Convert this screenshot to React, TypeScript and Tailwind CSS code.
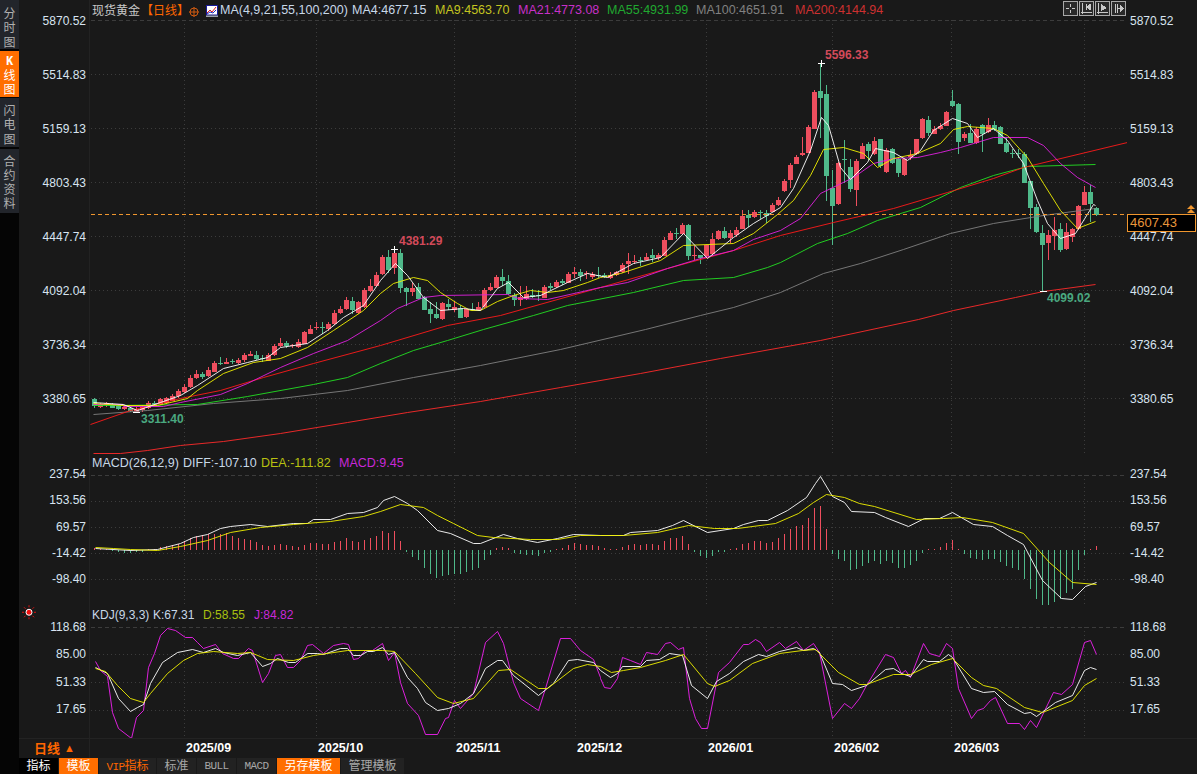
type Candle = [number, number, number, number, number];

// candle rows read off as [bodyTop, bodyBottom, high, low, isRed]
const rowsA: Candle[] = [
  [508,530,503,532,0],[522,530,520,534,1],[520,524,516,530,1],[524,534,520,536,0],[528,536,524,538,0],[530,537,526,540,1],[534,544,530,546,0],[536,546,532,550,1],[530,540,524,544,1],[520,534,514,538,1],[520,527,514,530,0],[508,524,504,526,1],[504,518,502,522,1],[498,512,492,514,1],[484,500,478,504,1],[470,486,462,488,1],[444,470,436,474,1],[432,444,420,446,1],[432,440,426,448,0],[420,438,410,440,1],[398,424,392,426,1],[398,402,380,404,0],[396,402,385,404,1],[394,398,388,404,0],[390,400,384,402,1],[376,392,368,394,1],[372,378,364,380,1],[374,386,364,392,0],[384,388,376,398,0],[374,392,370,394,1],[348,376,342,378,1],[338,348,324,350,1],[340,350,332,354,0],[346,350,342,354,1],[336,350,326,352,1],[306,342,304,344,1],[296,310,286,312,1],[292,296,276,300,1],[292,296,276,312,0],[282,298,276,304,1],[248,282,240,284,1],[238,250,228,252,1],[210,238,200,240,1],[212,240,200,250,0],[216,250,212,252,1],[180,232,174,234,1],[168,182,146,184,1],[134,166,126,168,1],[82,134,76,136,1],[80,118,60,130,0],[70,116,50,130,1],[70,174,58,190,0],[174,186,170,226,0],[174,186,160,200,1],[170,206,160,208,0],[200,240,198,240,0],[238,252,216,278,0],[252,264,216,266,0],[220,268,216,270,1],[222,232,208,240,0],[232,242,212,244,1],[234,264,226,264,0],[238,262,236,264,1],[236,240,220,244,0],[232,240,216,244,1],
];
const rowsB: Candle[] = [
  [270,322,264,324,1],[262,272,250,274,1],[232,264,226,266,1],[232,244,208,260,0],[244,284,224,284,0],[286,300,278,318,0],[292,300,258,318,1],[282,296,258,300,1],[284,290,268,296,0],[284,288,270,304,0],[262,294,256,296,1],[258,264,248,268,0],[246,262,240,264,1],[244,250,236,254,0],[222,248,216,250,1],[216,222,200,234,1],[216,228,208,244,0],[220,224,214,238,1],[222,232,216,238,1],[226,230,202,236,0],[226,232,220,236,0],[224,232,216,236,1],[216,224,212,226,1],[196,218,190,220,1],[184,192,158,220,1],[182,186,164,190,1],[180,184,170,196,0],[170,180,160,182,1],[164,172,146,186,0],[166,176,158,178,1],[120,168,112,170,1],[98,118,92,120,1],[98,102,84,118,0],[76,102,68,104,1],[76,170,72,180,0],[166,170,138,180,1],[166,176,164,190,0],[136,168,136,176,1],[118,164,98,166,1],[94,118,90,120,1],[92,114,80,116,0],[100,114,90,128,1],[90,104,80,110,1],[48,86,30,88,1],[44,52,30,80,0],[36,52,30,54,1],[36,40,30,56,0],[38,48,30,70,0],[16,36,10,38,1],[0,16,-8,18,1],
];
const rowsC: Candle[] = [
  [362,392,356,394,1],[314,360,310,386,1],[290,312,286,314,1],[280,286,232,288,1],[200,278,196,280,1],[95,205,90,207,1],[93,114,10,235,0],[102,348,76,425,0],[385,440,330,555,0],[308,432,306,434,1],[298,302,240,370,0],[322,388,296,394,0],[304,392,296,438,1],[258,296,250,298,1],[252,274,246,300,0],[244,282,230,284,1],[238,320,236,322,0],[270,336,264,338,1],[268,310,264,312,0],[298,340,292,352,0],[298,346,296,348,1],[284,290,270,300,1],[238,282,236,284,1],[178,234,174,236,1],[180,218,168,228,0],[206,220,198,222,1],[198,208,188,210,1],[155,196,152,198,1],[122,138,90,140,0],[132,246,130,284,0],[222,234,216,242,1],[218,248,192,250,0],[206,248,200,250,1],[196,222,192,276,0],[196,216,174,218,1],[196,210,182,212,0],[200,250,198,252,0],[248,276,230,278,0],[279,281,268,294,0],[279,281,268,295,0],[282,368,276,370,0],[364,444,362,505,0],[442,516,432,518,0],[518,554,495,692,0],[524,548,510,600,1],[510,528,470,570,1],[508,570,490,578,0],[516,566,488,568,1],[506,530,504,545,1],[438,508,434,510,1],[396,434,378,436,1],[396,432,375,485,0],[444,464,440,466,0],
];

const crop = (rows: Candle[], oy: number): Candle[] =>
  rows.map(([t, b, h, l, r]) => [oy + t / 3, oy + b / 3, oy + h / 3, oy + l / 3, r]);
const candles = [...crop(rowsA, 230), ...crop(rowsB, 200), ...crop(rowsC, 60)];

const barsA = [2,1,1,-1,-2,-3,-3,-2,-2,1,1,3,4,5,6,9,12,14,14.5,16,16,16,17,14,12,11,10,8,5,4,5,6,5,4,3,5,7,7,6,6,8,9,12,9,8,10,12,14,19,17,19,9,-2,-7,-10,-18,-24,-28,-26,-25,-24,-24,-22,-20,-18,-10,-5,2,3,2,-3,-4,-5,-5,-6,-3,-2,1,2,5,7,6,5,5,4];
const barsB = [2,1,1,3,6,7,6,7,7,6,10,14,14,16,7,-2,-7,-9,-7,-2,-2,1,2,7,8,10,10,8,9,14,18,24,27,28,36,48,50,24,-5,-10,-13,-23,-22,-18,-15,-13,-16,-13,-15,-20,-20,-17,-12,-3,1,1,3,8,11,1,-4,-9,-10,-11,-10,-10,-14,-18,-20,-23,-33,-44,-56,-63,-66,-59,-56,-49,-45,-23,-6,1,4].map((v) => v * 0.876);
const macdBars = [...barsA, ...barsB];

const ma200 = "93,453 120,453 147,450 180,445 223,441 280,433 347,422 407,412 480,401 560,387 640,373 720,358 820,340 918,319 953,310 1015,297 1043,291 1095,284";
const trend = "90,424 130,410 180,398 220,390 263,377 313,363 380,345 447,325 500,315 600,287 667,268 733,250 780,235 833,222 893,208 947,192 993,178 1023,167 1127,142";
const ma100 = "93,414 147,410 213,403 280,398 347,390 413,377 480,365 560,349 645,329 700,315 733,307 780,292 823,273 860,263 903,249 950,233 993,223 1043,215 1095,208";
const ma55 = "93,405 113,405 197,404 247,396 313,384 347,377 380,363 413,350 447,340 483,329 533,315 567,305 633,292 683,280 733,277 767,267 780,262 817,243 847,233 877,220 920,207 960,187 993,175 1027,166 1095,164";
const ma21 = "93,404 123,404 123,406 163,406 180,402 220,394 247,383 280,367 313,353 347,340 380,320 397,308 423,297 440,295 507,294 518,298 547,299 600,287 627,282 667,268 700,258 733,250 753,239 780,230 800,218 820,193 853,177 873,163 893,158 917,157 940,152 960,147 993,137 1027,137 1043,145 1060,163 1077,177 1095,187";
const ma9 = "93,403 123,405 157,405 187,398 197,390 223,373 253,362 280,358 307,347 333,330 363,310 380,293 393,283 413,277 427,280 440,292 457,303 470,310 480,310 497,301 513,295 530,290 547,292 563,290 587,282 600,277 620,273 660,260 683,245 733,243 753,233 777,214 793,200 810,175 823,149 843,147 863,153 877,167 893,158 917,153 940,143 953,129 967,126 993,128 1007,135 1027,157 1043,183 1060,210 1077,228 1095,221";
const ma4 = "93,402 123,404 137,410 160,402 180,395 197,385 223,368 247,362 267,357 280,347 307,343 327,330 343,317 363,305 380,280 395,263 407,275 423,297 440,310 463,308 480,310 497,288 508,282 523,297 540,295 567,282 587,273 607,277 633,263 660,257 683,233 707,258 733,237 753,223 780,207 793,188 810,150 821,117 828,125 840,167 850,179 867,162 875,148 893,152 907,160 920,150 933,130 952,118 967,123 977,137 993,128 1007,140 1023,163 1037,200 1047,223 1060,238 1075,233 1093,204 1095,205";

// flat x,y lists read from crops; 3x crops use sx 3, the wide ones 2.627
const path = (ox: number, oy: number, sx: number, d: number[]) => {
  const out: string[] = [];
  for (let i = 0; i < d.length; i += 2) out.push(`${Math.round(ox + d[i] / sx)},${Math.round(oy + d[i + 1] / 3)}`);
  return out.join(" ");
};

const diff = path(80,455,3,[44,278,150,285,230,283,300,265,340,245,380,238,420,218,450,214,510,208,560,212,640,205,680,203,700,193,750,192,800,175,850,172,890,155,910,135,943,124,980,145,1010,165,1072,225,1110,235,1180,265,1200,265,1270,238,1310,250,1370,260,1430,250,1480,238,1560,240]) + " " +
  path(600,455,2.627,[0,240,60,240,80,230,150,224,190,210,218,196,280,230,350,218,375,208,415,196,440,196,490,165,540,125,565,85,578,64,610,123,640,140,660,168,720,170,750,185,810,212,850,190,890,190,925,172,980,207,1030,212,1070,240,1110,268,1160,375,1210,430,1240,431,1275,393,1303,381]);
const dea = path(80,455,3,[44,277,100,278,150,283,230,284,300,272,380,255,450,232,540,217,640,207,750,198,850,182,900,168,960,148,1030,155,1070,180,1120,205,1190,240,1240,246,1350,252,1430,252,1500,241,1560,240]) + " " +
  path(600,455,2.627,[0,241,60,240,150,232,230,210,300,220,360,218,460,205,520,175,560,140,595,118,640,127,680,145,720,153,830,192,900,190,950,186,1030,200,1110,235,1180,320,1240,380,1303,388]);

const kdjJ = path(80,605,3,[44,168,60,195,80,212,97,320,115,370,152,398,168,335,188,315,205,185,222,145,240,90,260,70,285,75,315,95,335,95,350,110,368,130,405,118,425,145,460,158,475,158,505,128,515,135,547,230,565,205,585,150,600,148,620,185,640,185,660,165,680,120,695,118,730,145,760,120,790,115,805,118,820,162,835,160,855,135,875,135,905,115,925,165,943,140,960,230,980,295,1015,330,1035,387,1070,387,1095,340,1105,335,1122,285,1140,310,1180,265,1215,110,1250,78,1270,115,1300,230,1320,280,1375,315,1395,250,1440,100,1470,100,1500,135,1540,162,1560,215]) + " " +
  path(600,605,2.627,[0,218,10,245,25,250,45,220,58,155,80,165,105,178,120,142,150,148,170,115,185,112,205,133,217,125,235,280,250,340,265,370,280,370,310,200,340,170,375,118,390,118,407,102,420,110,437,137,470,110,487,128,515,108,533,135,560,115,575,140,610,340,640,295,660,310,680,280,700,240,750,148,770,155,790,205,800,195,815,215,848,115,865,145,890,152,910,115,925,130,940,250,975,338,990,315,1005,310,1025,285,1037,275,1070,355,1100,355,1115,372,1130,345,1145,365,1190,262,1210,268,1240,238,1272,112,1288,105,1303,148]);
const kdjK = path(80,605,3,[44,185,80,205,115,280,150,318,170,305,190,298,210,235,245,170,290,142,335,132,370,140,405,130,430,142,470,150,510,140,547,182,570,175,590,160,625,170,645,172,680,145,710,145,730,148,780,130,800,130,820,150,840,150,860,138,880,138,905,125,925,148,943,142,980,215,1010,250,1035,290,1070,315,1105,308,1140,295,1180,265,1215,190,1250,165,1265,165,1300,210,1375,270,1420,235,1465,165,1490,163,1540,172,1560,195]) + " " +
  path(600,605,2.627,[0,195,25,215,45,205,58,182,105,182,120,165,155,162,180,143,215,150,240,240,280,280,305,228,340,205,375,168,415,148,437,152,470,138,515,127,533,135,560,128,575,140,610,235,635,238,660,255,700,240,750,192,770,188,790,205,815,212,848,162,860,168,890,168,915,148,925,155,975,250,1005,262,1035,258,1070,298,1115,325,1130,322,1145,333,1195,292,1240,270,1272,195,1288,186,1303,193]);
const kdjD = path(80,605,3,[44,190,75,197,110,240,150,280,190,290,210,265,260,205,310,165,350,145,400,138,470,145,510,140,560,162,640,165,700,150,800,135,905,135,943,138,1005,205,1070,275,1120,295,1180,280,1255,195,1290,193,1375,248,1400,250,1480,190,1520,178,1560,182]) + " " +
  path(600,605,2.627,[0,183,30,200,60,195,105,187,170,165,218,148,280,235,300,243,340,225,400,175,470,145,530,135,565,132,625,200,680,238,700,238,770,208,815,208,870,178,925,158,975,215,1005,240,1040,250,1115,305,1160,320,1240,285,1272,240,1303,218]);

const RED = "#ee4e5e";
const GREEN = "#4fb98a";
const monthX = [184, 316, 454, 575, 706, 832, 951, 1084];

function Grid({ top, bottom, rows }: { top: number; bottom: number; rows: number[] }) {
  return (
    <g shapeRendering="crispEdges" strokeWidth={1}>
      <line x1={91} x2={1127} y1={top + 0.5} y2={top + 0.5} stroke="#3c3c3c" strokeDasharray="4 3" />
      {rows.map((y) => (
        <line key={y} x1={91} x2={1127} y1={y + 0.5} y2={y + 0.5} stroke="#3c3c3c" strokeDasharray="1 3" />
      ))}
      {monthX.map((x) => (
        <line key={x} x1={x + 0.5} x2={x + 0.5} y1={top} y2={bottom} stroke="#3c3c3c" strokeDasharray="1 3" />
      ))}
    </g>
  );
}

function Line({ points, color }: { points: string; color: string }) {
  return <polyline points={points} fill="none" stroke={color} strokeWidth={0.9} strokeLinejoin="bevel" transform="translate(0.5 0.5)" />;
}

function Cross({ x, y }: { x: number; y: number }) {
  return <path d={`M${x - 3} ${y + 0.5}H${x + 4}M${x + 0.5} ${y - 3}V${y + 4}`} stroke="#fff" shapeRendering="crispEdges" />;
}

function MainChart() {
  const n = candles.length;
  return (
    <svg viewBox="90 20 1037 435" className="block w-[1037px] h-[435px]">
      <Grid top={20} bottom={455} rows={[74, 128, 182, 236, 290, 344, 398]} />
      <g shapeRendering="crispEdges">
        {candles.map(([t, b, h, l, r], i) => {
          const x = 1096 - 6 * (n - 1 - i);
          const c = r ? RED : GREEN;
          return (
            <g key={i} fill={c}>
              <rect x={x} y={Math.round(h)} width={1} height={Math.max(1, Math.round(l - h))} />
              <rect x={x - 2} y={Math.round(t)} width={5} height={Math.max(1, Math.round(b - t))} />
            </g>
          );
        })}
      </g>
      <Line points={ma200} color="#ff2a2a" />
      <Line points={ma100} color="#808080" />
      <Line points={ma55} color="#22e022" />
      <Line points={trend} color="#ff1a1a" />
      <Line points={ma21} color="#e020e0" />
      <Line points={ma9} color="#f0f000" />
      <Line points={ma4} color="#ffffff" />
      <line x1={91} x2={1127} y1={214.5} y2={214.5} stroke="#f0962e" strokeDasharray="4 3" shapeRendering="crispEdges" />
      <Cross x={821} y={63} />
      <Cross x={394} y={249} />
      <path d="M1040 291.5H1047M133 412.5H140" stroke="#fff" shapeRendering="crispEdges" />
      <g className="text-[12px] font-bold">
        <text x={825} y={59} fill="#d24a5a">5596.33</text>
        <text x={399} y={245} fill="#d24a5a">4381.29</text>
        <text x={1047} y={302} fill="#4aa880">4099.02</text>
        <text x={141} y={423} fill="#4aa880">3311.40</text>
      </g>
    </svg>
  );
}

function MacdChart() {
  const n = macdBars.length;
  return (
    <svg viewBox="90 472 1037 133" className="block w-[1037px] h-[133px]">
      <Grid top={475} bottom={605} rows={[501, 527, 553, 579]} />
      <g shapeRendering="crispEdges">
        {macdBars.map((v, i) => {
          const x = 1096 - 6 * (n - 1 - i);
          return v >= 0 ? (
            <rect key={i} x={x} y={550 - Math.round(v)} width={1} height={Math.max(1, Math.round(v))} fill={RED} />
          ) : (
            <rect key={i} x={x} y={550} width={1} height={Math.round(-v)} fill={GREEN} />
          );
        })}
      </g>
      <Line points={diff} color="#ffffff" />
      <Line points={dea} color="#f0f000" />
    </svg>
  );
}

function KdjChart() {
  return (
    <svg viewBox="90 624 1037 114" className="block w-[1037px] h-[114px]">
      <Grid top={627} bottom={738} rows={[654, 682, 710]} />
      <Line points={kdjJ} color="#f020f0" />
      <Line points={kdjK} color="#ffffff" />
      <Line points={kdjD} color="#f0f000" />
    </svg>
  );
}

function ToolButton({ line, fill }: { line: string; fill?: string }) {
  return (
    <svg viewBox="0 0 15 15" className="w-[15px] h-[15px] block" shapeRendering="crispEdges">
      <rect x={0.5} y={0.5} width={14} height={14} fill="#2a2a2a" stroke="#a8a8a8" />
      <path d={line} fill="none" stroke="#c8c8c8" />
      {fill && <path d={fill} fill="#c8c8c8" />}
    </svg>
  );
}

function MaIcon() {
  return (
    <svg viewBox="0 0 12 12" className="w-[12px] h-[12px] block">
      <rect x={0.5} y={0.5} width={11} height={9.5} fill="#fff" stroke="#1a1a9a" />
      <polyline points="1,8 4,5 6,7 10,2" fill="none" stroke="#e02020" />
      <polyline points="1,9 4,7 7,8 10,5" fill="none" stroke="#2030c0" />
      <rect x={0} y={10.5} width={12} height={1.5} fill="#9aa0aa" />
    </svg>
  );
}

function AxisLabels({ items, gap }: { items: string[]; gap: string }) {
  return (
    <div className={`flex flex-col ${gap}`}>
      {items.map((t) => (
        <span key={t} className="h-[14px] leading-[14px]">{t}</span>
      ))}
    </div>
  );
}

const mainAxis = ["5870.52", "5514.83", "5159.13", "4803.43", "4447.74", "4092.04", "3736.34", "3380.65"];
const macdAxis = ["237.54", "153.56", "69.57", "-14.42", "-98.40"];
const kdjAxis = ["118.68", "85.00", "51.33", "17.65"];

export default function App() {
  return (
    <div className="w-[1197px] h-[774px] overflow-hidden flex bg-[#191919] text-[12px] text-[#d8e4f0] font-['Liberation_Sans','Noto_Sans_CJK_SC',sans-serif]">
      <aside className="w-[19px] shrink-0 bg-[#050505] flex flex-col gap-[1.5px] text-center leading-[14.3px] text-[#b0b0b0]">
        <div className="h-[49px] bg-[#22252b] pt-[7px]">分<br />时<br />图</div>
        <div className="h-[46px] bg-[#ff6e00] pt-[3px] text-white"><span className="font-['Liberation_Mono'] font-bold">K</span><br />线<br />图</div>
        <div className="h-[49px] bg-[#22252b] pt-[6px]">闪<br />电<br />图</div>
        <div className="h-[64px] bg-[#22252b] pt-[6px]">合<br />约<br />资<br />料</div>
      </aside>

      <div className="flex-1 flex flex-col min-w-0">
        <section className="h-[455px] flex">
          <div className="w-[71px] shrink-0 pt-[13.5px] pr-[3px] text-right border-r border-[#222222]">
            <AxisLabels items={mainAxis} gap="gap-[40px]" />
          </div>
          <div className="w-[1037px] shrink-0">
            <div className="h-[20px] flex items-center pl-[2px] pt-[1px] text-[12.5px] whitespace-nowrap">
              <span className="w-[49px] text-[#c8c8c8] text-[12px]">现货黄金</span>
              <span className="w-[48px] text-[#ff6600] text-[12px]">【日线】</span>
              <svg viewBox="0 0 10 10" className="w-[10px] h-[10px] mt-[2px]"><circle cx={5} cy={5} r={4} fill="none" stroke="#d05a10" /><path d="M0 5H10M5 0V10" stroke="#d05a10" /></svg>
              <span className="w-[7px]" />
              <MaIcon />
              <span className="w-[2px]" />
              <span className="w-[132px] text-[#c8d8e8]">MA(4,9,21,55,100,200)</span>
              <span className="w-[83px] text-[#c8d8e8]">MA4:4677.15</span>
              <span className="w-[83px] text-[#c4c420]">MA9:4563.70</span>
              <span className="w-[89px] text-[#c830c8]">MA21:4773.08</span>
              <span className="w-[89px] text-[#20a830]">MA55:4931.99</span>
              <span className="w-[99px] text-[#808080]">MA100:4651.91</span>
              <span className="text-[#cc3030]">MA200:4144.94</span>
              <div className="ml-auto flex gap-[1px] mr-[1px] -mt-[4px]">
                <ToolButton line="M7.5 3V6M7.5 9V12M3 7.5H6M9 7.5H12" />
                <ToolButton line="M3.5 2V13M2 11.5H13M7.5 3V9M11.5 3V9" fill="M7 6L11 3V9Z" />
                <ToolButton line="M3.5 2V13M2 11.5H13" fill="M6 3L12 7L6 10Z" />
                <ToolButton line="M4.5 3V12M6.5 3V12M6.5 7.5H9" fill="M9 4L13 7.5L9 11Z" />
              </div>
            </div>
            <MainChart />
          </div>
          <div className="relative flex-1 pt-[13.5px] pl-[3px]">
            <AxisLabels items={mainAxis} gap="gap-[40px]" />
            <div className="absolute left-0 top-[214px] w-[69px] h-[18px] border border-[#f0962e] bg-black pl-[2px] leading-[16px] text-[13px] text-[#e8963c]">4607.43</div>
            <svg viewBox="0 0 10 8" className="absolute left-[59px] top-[205px] w-[10px] h-[8px]"><path d="M1 4L5 0L9 4ZM1 8L5 4L9 8Z" fill="#f0962e" /></svg>
          </div>
        </section>

        <section className="h-[150px] flex">
          <div className="w-[71px] shrink-0 pt-[12px] pr-[3px] text-right border-r border-[#222222]">
            <AxisLabels items={macdAxis} gap="gap-[12.25px]" />
          </div>
          <div className="w-[1037px] shrink-0">
            <div className="h-[17px] flex items-center pl-[2px] text-[12.5px] whitespace-nowrap">
              <span className="w-[91px] text-[#c8d8e8]">MACD(26,12,9)</span>
              <span className="w-[78px] text-[#c8d8e8]">DIFF:-107.10</span>
              <span className="w-[78px] text-[#b8c010]">DEA:-111.82</span>
              <span className="text-[#c828d8]">MACD:9.45</span>
            </div>
            <MacdChart />
          </div>
          <div className="flex-1 pt-[12px] pl-[3px]">
            <AxisLabels items={macdAxis} gap="gap-[12.25px]" />
          </div>
        </section>

        <section className="h-[133px] flex">
          <div className="w-[71px] shrink-0 pr-[3px] text-right border-r border-[#222222]">
            <svg viewBox="0 0 14 14" className="w-[14px] h-[14.5px] ml-[3px] block">
              <circle cx={7} cy={7} r={3} fill="#f01010" stroke="#fff" />
              <path d="M7 0V2M7 12V14M0 7H2M12 7H14M2 2L3.5 3.5M12 2L10.5 3.5M2 12L3.5 10.5M12 12L10.5 10.5" stroke="#e01010" />
            </svg>
            <AxisLabels items={kdjAxis} gap="gap-[13.5px]" />
          </div>
          <div className="w-[1037px] shrink-0">
            <div className="h-[19px] flex items-center pl-[2px] text-[12px] whitespace-nowrap">
              <span className="w-[61px] text-[#c8d8e8]">KDJ(9,3,3)</span>
              <span className="w-[50px] text-[#c8d8e8]">K:67.31</span>
              <span className="w-[51px] text-[#a8c010]">D:58.55</span>
              <span className="text-[#c828d8]">J:84.82</span>
            </div>
            <KdjChart />
          </div>
          <div className="flex-1 pt-[14.5px] pl-[3px]">
            <AxisLabels items={kdjAxis} gap="gap-[13.5px]" />
          </div>
        </section>

        <div className="h-[20px] flex items-center border-t border-[#232323]">
          <div className="w-[71px] shrink-0 pl-[15px] text-[13px] font-bold text-[#ff6600] flex items-center gap-[4px] border-r border-[#222222] h-full">
            日线<span className="text-[11px] font-normal">▲</span>
          </div>
          <div className="flex font-bold text-[12.5px] text-white pl-[96px]">
            <span className="w-[132px]">2025/09</span>
            <span className="w-[138px]">2025/10</span>
            <span className="w-[121px]">2025/11</span>
            <span className="w-[131px]">2025/12</span>
            <span className="w-[126px]">2026/01</span>
            <span className="w-[120px]">2026/02</span>
            <span>2026/03</span>
          </div>
        </div>

        <div className="h-[16px] flex gap-[1px] text-center leading-[16px] text-[12px]">
          <div className="w-[39px] bg-black text-white">指标</div>
          <div className="w-[39px] bg-[#ff6e00] text-white">模板</div>
          <div className="w-[57px] bg-[#222] text-[#ff6600]"><span className="font-['Liberation_Mono'] text-[11px] tracking-[-0.6px]">VIP</span>指标</div>
          <div className="w-[39px] bg-[#222] text-[#a8a8a8]">标准</div>
          <div className="w-[39px] bg-[#222] text-[#a8a8a8] font-['Liberation_Mono'] text-[11px] tracking-[-0.6px]">BULL</div>
          <div className="w-[39px] bg-[#222] text-[#a8a8a8] font-['Liberation_Mono'] text-[11px] tracking-[-0.6px]">MACD</div>
          <div className="w-[63px] bg-[#ff6e00] text-white">另存模板</div>
          <div className="w-[63px] bg-[#222] text-[#a8a8a8]">管理模板</div>
        </div>
      </div>
    </div>
  );
}
